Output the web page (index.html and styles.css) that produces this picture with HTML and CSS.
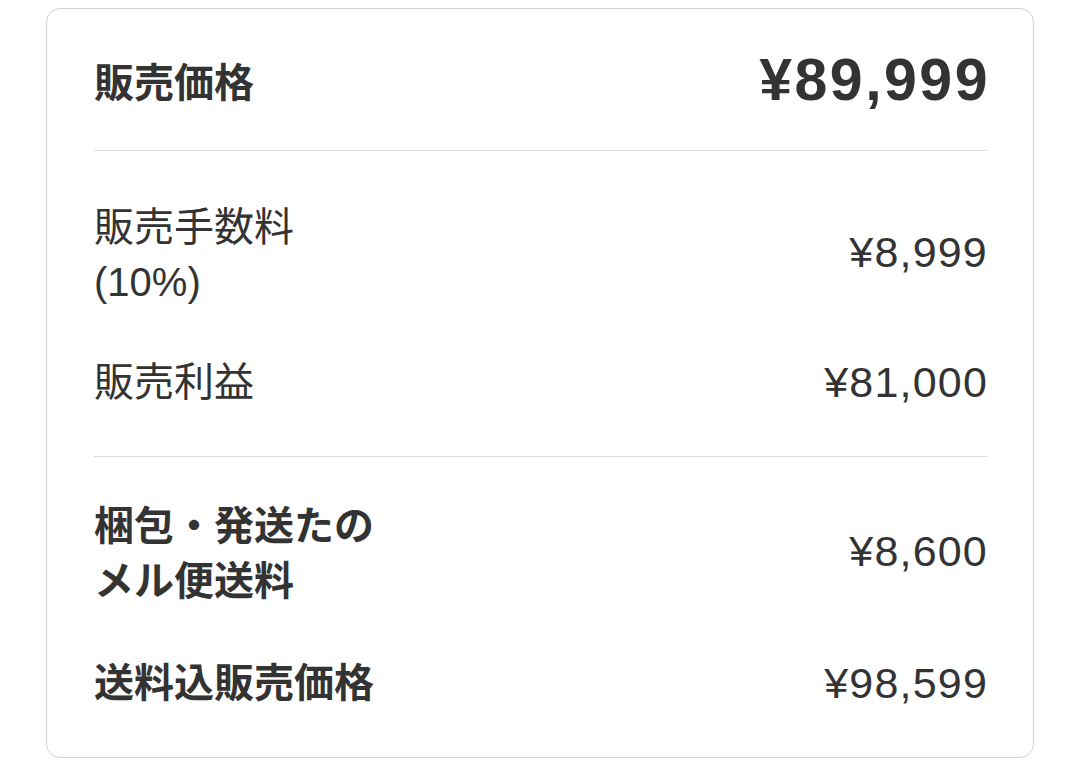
FILE: index.html
```html
<!DOCTYPE html>
<html lang="ja">
<head>
<meta charset="utf-8">
<title>販売価格</title>
<link rel="stylesheet" href="styles.css">
</head>
<body>
<div class="card">
  <div class="head">
    <div class="head-label">販売価格</div>
    <div class="head-value">¥89,999</div>
  </div>
  <div class="divider"></div>
  <div class="section sec-a">
    <div class="row two">
      <div class="label">販売手数料<br>(10%)</div>
      <div class="value">¥8,999</div>
    </div>
    <div class="row">
      <div class="label">販売利益</div>
      <div class="value">¥81,000</div>
    </div>
  </div>
  <div class="divider"></div>
  <div class="section sec-b">
    <div class="row two">
      <div class="label bold">梱包・発送たの<br>メル便送料</div>
      <div class="value">¥8,600</div>
    </div>
    <div class="row">
      <div class="label bold">送料込販売価格</div>
      <div class="value">¥98,599</div>
    </div>
  </div>
</div>
</body>
</html>
```
FILE: styles.css
```css
html, body {
  margin: 0;
  padding: 0;
  background: #ffffff;
}

body {
  font-family: "Liberation Sans", "Noto Sans CJK JP", sans-serif;
  color: #333333;
}

.card {
  box-sizing: border-box;
  width: 988px;
  height: 750px;
  margin: 8px 0 0 46px;
  border: 1px solid #d4d4d4;
  border-radius: 14px;
  padding: 0 46px 0 47px;
  display: flex;
  flex-direction: column;
}

.head {
  height: 141px;
  display: flex;
  align-items: center;
  justify-content: space-between;
}

.head-label {
  font-family: "Noto Sans CJK JP", sans-serif;
  font-weight: 700;
  font-size: 40px;
  line-height: 56px;
}

.head-value {
  font-weight: 700;
  font-size: 59px;
  letter-spacing: 2.5px;
  margin-right: -3px;
  line-height: 70px;
}

.divider {
  height: 1px;
  background: #dcdcdc;
  flex: none;
}

.section {
  display: flex;
  flex-direction: column;
}

.sec-a {
  padding: 49px 0 46px;
  gap: 45px;
}

.sec-b {
  padding: 42px 0 0;
  gap: 47px;
}

.row {
  display: flex;
  align-items: center;
  justify-content: space-between;
}

.row.two .value {
  margin-top: -6px;
}

.label {
  font-family: "Liberation Sans", "Noto Sans CJK JP", sans-serif;
  font-size: 40px;
  line-height: 55px;
  font-weight: 400;
}

.label.bold {
  font-weight: 700;
}

.value {
  font-size: 43px;
  line-height: 55px;
  letter-spacing: 1.2px;
  margin-right: -1px;
}
```
